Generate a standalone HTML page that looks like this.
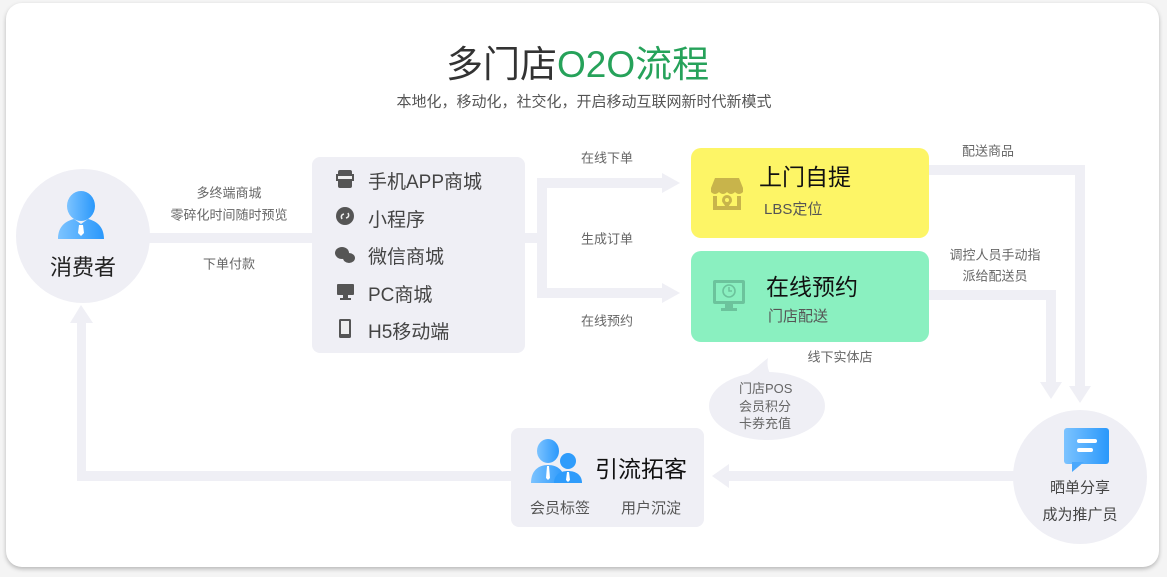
<!DOCTYPE html>
<html><head><meta charset="utf-8"><style>
*{margin:0;padding:0;box-sizing:border-box}
body{width:1167px;height:577px;background:#f4f4f4;position:relative;overflow:hidden;font-family:"Liberation Sans","Noto Sans CJK SC",sans-serif}
.card{position:absolute;left:6px;top:3px;width:1153px;height:564px;background:#fff;border-radius:16px;box-shadow:0 2px 4px rgba(0,0,0,.25)}
.t{position:absolute;white-space:nowrap;color:#666;font-size:13px;text-align:center;transform:translate(-50%,-50%)}
.abs{position:absolute}
</style></head><body>
<div class="card"></div>
<svg class="abs" style="left:0;top:0" width="1167" height="577">
<g fill="#efeff5">
<rect x="146" y="233" width="170" height="10"/>
<rect x="524" y="233" width="20" height="10"/>
<rect x="537" y="178" width="10" height="120"/>
<rect x="537" y="178" width="126" height="10"/>
<polygon points="662,173 680,183 662,193"/>
<rect x="537" y="288" width="126" height="10"/>
<polygon points="662,283 680,293 662,303"/>
<rect x="929" y="165" width="156" height="10"/>
<rect x="1075" y="165" width="10" height="222"/>
<polygon points="1069,386 1091,386 1080,403"/>
<rect x="929" y="290" width="127" height="10"/>
<rect x="1046" y="290" width="10" height="93"/>
<polygon points="1040,382 1062,382 1051,399"/>
<rect x="728" y="471" width="290" height="10"/>
<polygon points="729,464 729,488 712,476"/>
<rect x="77" y="471" width="436" height="10"/>
<rect x="77" y="322" width="9" height="155"/>
<polygon points="70,323 93,323 81,305"/>
</g>
<circle cx="83" cy="236" r="67" fill="#efeff5"/>
<circle cx="1080" cy="477" r="67" fill="#efeff5"/>
<ellipse cx="767" cy="406" rx="58" ry="34" fill="#efeff5"/>
<path d="M742,378 C752,372 760,364 768,358 C766,368 770,376 776,380 Z" fill="#efeff5"/>
<defs>
<linearGradient id="bl" x1="0" x2="1"><stop offset="0" stop-color="#7cc3ff"/><stop offset="1" stop-color="#2a98fb"/></linearGradient>
</defs>
<ellipse cx="81" cy="206" rx="14" ry="15" fill="url(#bl)"/>
<path d="M58,239 C58,226 66,221 74,219 L81,224 L88,219 C96,221 104,226 104,239 Z" fill="url(#bl)"/>
<path d="M79,225 L83,225 L84,233 L81,236 L78,233Z" fill="#fff"/>
<rect x="1064" y="428" width="45" height="36" rx="3" fill="url(#bl)"/>
<path d="M1072,462 L1072,472 L1084,462Z" fill="#4aa8fc"/>
<rect x="1077" y="439" width="20" height="4" rx="2" fill="#fff"/>
<rect x="1077" y="448" width="16" height="4" rx="2" fill="#fff"/>
</svg>

<div class="t" style="left:446px;top:61px;transform:translate(0,-50%);font-size:37px;color:#333">多门店<span style="color:#26a25a">O2O流程</span></div>
<div class="t" style="left:584px;top:101px;font-size:15px;color:#555">本地化，移动化，社交化，开启移动互联网新时代新模式</div>

<div class="t" style="left:83px;top:266px;font-size:22px;color:#222">消费者</div>
<div class="t" style="left:229px;top:192px">多终端商城</div>
<div class="t" style="left:229px;top:214px">零碎化时间随时预览</div>
<div class="t" style="left:229px;top:263px">下单付款</div>

<div class="abs" style="left:312px;top:157px;width:213px;height:196px;background:#efeff5;border-radius:8px"></div>
<svg class="abs" style="left:334px;top:166px" width="24" height="176">
<g fill="#555">
<rect x="4" y="4" width="14" height="18" rx="2"/><rect x="2" y="8" width="18" height="7" fill="#555"/><rect x="4" y="10" width="14" height="3" fill="#eee"/>
<circle cx="11" cy="50" r="9"/><path d="M8,53 q-2,-4 2,-5 M14,47 q2,4 -2,5" stroke="#eee" stroke-width="1.5" fill="none"/>
<ellipse cx="8" cy="87" rx="7" ry="6"/><ellipse cx="15" cy="92" rx="6" ry="5"/>
<rect x="3" y="118" width="17" height="11" rx="1"/><rect x="9" y="129" width="5" height="3"/><rect x="6" y="132" width="11" height="2"/>
<rect x="5" y="153" width="12" height="19" rx="1.5"/><rect x="7" y="155" width="8" height="13" fill="#eee"/>
</g>
</svg>
<div class="abs" style="left:368px;top:164px;font-size:19px;color:#444;line-height:37.5px">手机APP商城<br>小程序<br>微信商城<br>PC商城<br>H5移动端</div>

<div class="t" style="left:607px;top:157px">在线下单</div>
<div class="t" style="left:607px;top:238px">生成订单</div>
<div class="t" style="left:607px;top:320px">在线预约</div>

<div class="abs" style="left:691px;top:148px;width:238px;height:90px;background:#fdf566;border-radius:10px"></div>
<svg class="abs" style="left:709px;top:178px" width="36" height="34"><g fill="#c8b44b"><path d="M6,0 H30 L34,10 H2 Z"/><path d="M2,10 H34 V14 Q30,18 26,14 Q22,18 18,14 Q14,18 10,14 Q6,18 2,14Z"/><path d="M4,18 V32 H32 V18 H28 V28 H8 V18Z"/><circle cx="18" cy="22" r="5"/><path d="M13,23 L18,31 L23,23Z"/></g><circle cx="18" cy="22" r="2" fill="#fdf566"/></svg>
<div class="abs" style="left:759px;top:158px;font-size:23px;color:#111">上门自提</div>
<div class="abs" style="left:764px;top:198px;font-size:15px;color:#555">LBS定位</div>

<div class="abs" style="left:691px;top:251px;width:238px;height:91px;background:#8af0c0;border-radius:10px"></div>
<svg class="abs" style="left:713px;top:280px" width="34" height="34"><g fill="#6cc39c"><rect x="0" y="0" width="32" height="24" rx="2"/><rect x="12" y="24" width="8" height="5"/><rect x="8" y="28" width="16" height="3"/></g><rect x="3" y="3" width="26" height="18" fill="#8af0c0"/><circle cx="16" cy="11" r="6" fill="none" stroke="#6cc39c" stroke-width="1.6"/><path d="M16,7 V11 H19" stroke="#6cc39c" stroke-width="1.5" fill="none"/></svg>
<div class="abs" style="left:766px;top:268px;font-size:23px;color:#111">在线预约</div>
<div class="abs" style="left:768px;top:305px;font-size:15px;color:#555">门店配送</div>

<div class="t" style="left:988px;top:150px">配送商品</div>
<div class="t" style="left:995px;top:254px">调控人员手动指</div>
<div class="t" style="left:995px;top:275px">派给配送员</div>
<div class="t" style="left:840px;top:356px">线下实体店</div>
<div class="abs" style="left:739px;top:380px;font-size:13px;color:#666;line-height:17.5px">门店POS<br>会员积分<br>卡券充值</div>

<div class="abs" style="left:511px;top:428px;width:193px;height:99px;background:#efeff5;border-radius:8px"></div>
<svg class="abs" style="left:530px;top:438px" width="54" height="46"><ellipse cx="18" cy="13" rx="11" ry="12" fill="url(#bl)"/><path d="M1,45 C1,33 8,27 18,27 C28,27 35,33 35,45Z" fill="url(#bl)"/><circle cx="38" cy="23" r="8" fill="#2f9cfb"/><path d="M24,45 C24,37 30,33 38,33 C46,33 52,37 52,45Z" fill="#2f9cfb"/><path d="M17,28 L19,28 L20,40 L18,42 L16,40Z" fill="#fff"/><path d="M37,34 L39,34 L40,42 L38,44 L36,42Z" fill="#fff"/></svg>
<div class="abs" style="left:595px;top:450px;font-size:23px;color:#111">引流拓客</div>
<div class="abs" style="left:530px;top:497px;font-size:15px;color:#555">会员标签</div>
<div class="abs" style="left:621px;top:497px;font-size:15px;color:#555">用户沉淀</div>

<div class="t" style="left:1080px;top:487px;font-size:15px;color:#444">晒单分享</div>
<div class="t" style="left:1080px;top:514px;font-size:15px;color:#444">成为推广员</div>
</body></html>
